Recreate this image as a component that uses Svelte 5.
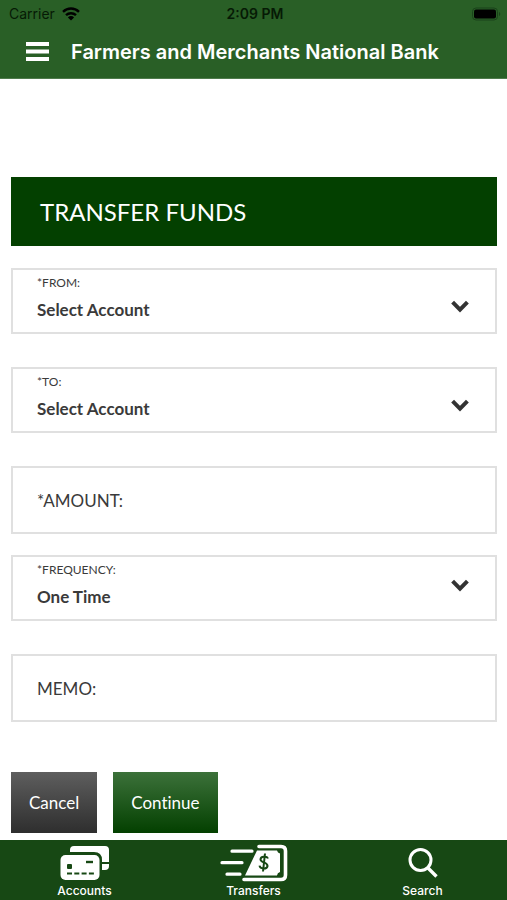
<script lang="ts">
  let from = $state('Select Account');
  let to = $state('Select Account');
  let amount = $state('');
  let frequency = $state('One Time');
  let memo = $state('');
</script>

{#snippet chevron()}
  <svg class="chevron" width="18" height="13" viewBox="0 0 18 13" aria-hidden="true">
    <path d="M1.6 2.2 9 9.6l7.4-7.4" fill="none" stroke="#333" stroke-width="4" />
  </svg>
{/snippet}

<div class="app">
  <header class="header">
    <div class="status">
      <span class="carrier">
        Carrier
        <svg width="18" height="14" viewBox="0 0 18 14" aria-hidden="true">
          <g fill="none" stroke="#000" stroke-width="2.4">
            <path d="M1 4.8a11.5 11.5 0 0 1 16 0" />
            <path d="M4 8.2a7.2 7.2 0 0 1 10 0" />
          </g>
          <path d="M9 13.6 5.9 10.4a4.4 4.4 0 0 1 6.2 0z" />
        </svg>
      </span>
      <span class="time">2:09 PM</span>
      <svg class="battery" width="30" height="14" viewBox="0 0 30 14" aria-hidden="true">
        <rect x="1.5" y="1" width="25" height="12" rx="3.5" fill="none" stroke="#1a431a" stroke-width="1" />
        <rect x="3" y="2.5" width="22" height="9" rx="2" />
        <path d="M28 5v4a2.2 2.2 0 0 0 0-4z" fill="#1a431a" />
      </svg>
    </div>
    <div class="title-bar">
      <button class="menu-btn" aria-label="Menu">
        <svg width="23" height="20" viewBox="0 0 23 20" aria-hidden="true">
          <path d="M0 2h23M0 9.5h23M0 17h23" stroke="#fff" stroke-width="4" />
        </svg>
      </button>
      <h1>Farmers and Merchants National Bank</h1>
    </div>
  </header>

  <main>
    <h2>TRANSFER FUNDS</h2>

    <form onsubmit={(e) => e.preventDefault()}>
      <div class="field select-field">
        <label for="from">*FROM:</label>
        <select id="from" bind:value={from}>
          <option>Select Account</option>
        </select>
        {@render chevron()}
      </div>

      <div class="field select-field">
        <label for="to">*TO:</label>
        <select id="to" bind:value={to}>
          <option>Select Account</option>
        </select>
        {@render chevron()}
      </div>

      <div class="field text-field amount">
        <label for="amount">*AMOUNT:</label>
        <input id="amount" type="text" inputmode="decimal" bind:value={amount} />
      </div>

      <div class="field select-field frequency">
        <label for="frequency">*FREQUENCY:</label>
        <select id="frequency" bind:value={frequency}>
          <option>One Time</option>
        </select>
        {@render chevron()}
      </div>

      <div class="field text-field">
        <label for="memo">MEMO:</label>
        <input id="memo" type="text" bind:value={memo} />
      </div>

      <div class="actions">
        <button type="button" class="btn cancel">Cancel</button>
        <button type="submit" class="btn continue">Continue</button>
      </div>
    </form>
  </main>

  <nav class="tabs">
    <a href="#accounts">
      <svg width="50" height="36" viewBox="0 0 50 36" aria-hidden="true">
        <path d="M10 7V5q0-4 4-4h31q4 0 4 4v12h-7v-2q0-8-8-8z" fill="#fff" />
        <path d="M42 19h7v2q0 4-4 4h-3z" fill="#fff" />
        <rect x="0.5" y="10" width="39" height="25" rx="5" fill="#fff" />
        <rect x="7" y="19" width="5" height="5" rx="1" fill="#174814" />
        <path d="M26 17h7" stroke="#174814" stroke-width="2.4" />
        <path d="M7 28.5h27" stroke="#174814" stroke-width="2" stroke-dasharray="5 2.3" />
      </svg>
      Accounts
    </a>
    <a href="#transfers">
      <svg width="68" height="38" viewBox="0 0 68 38" aria-hidden="true">
        <path d="M12 7.2h20M2 18.7h20M7 30.2h13" stroke="#fff" stroke-width="3.2" stroke-linecap="round" />
        <path d="M39 2.5h22q4.5 0 4.5 4.5v24q0 4.5-4.5 4.5H24" fill="none" stroke="#fff" stroke-width="3.6" stroke-linecap="round" />
        <path d="M37 6.500h20a4 4 0 0 0 3 3v18.500a4 4 0 0 0-3 3.500H25z" fill="#fff" />
        <g fill="none" stroke="#174814" stroke-width="2">
          <path d="M48 14.5c-1-2.600-7.500-2.400-7.500 1s7.700 2.400 7 6.800c-.6 3.200-7.400 3-8-.6" />
          <path d="M45 9.500 43 27.500" />
        </g>
      </svg>
      Transfers
    </a>
    <a href="#search">
      <svg width="32" height="32" viewBox="0 0 32 32" aria-hidden="true">
        <circle cx="13.5" cy="13" r="10.5" fill="none" stroke="#fff" stroke-width="3" />
        <path d="m21 21 8.5 8.5" stroke="#fff" stroke-width="3.4" />
      </svg>
      Search
    </a>
  </nav>
</div>

<style>
  :global(body) {
    background: #fff;
  }

  .app {
    display: flex;
    flex-direction: column;
    min-height: 100vh;
    font-family: Lato, sans-serif;
    color: #3a3a3a;
  }

  .header {
    background: #295f26;
    font-family: Inter, sans-serif;
    border-bottom: 1px solid #4f7b4c;
  }

  .status {
    display: grid;
    grid-template-columns: 1fr auto 1fr;
    align-items: center;
    height: 27px;
    padding: 0 6px 0 9px;
    font-size: 14px;
    color: #061a05;
  }

  .carrier {
    display: flex;
    align-items: center;
    gap: 7px;
  }

  .time {
    font-weight: 600;
  }

  .battery {
    justify-self: end;
  }

  .title-bar {
    display: flex;
    align-items: center;
    gap: 22px;
    height: 51px;
    padding: 0 26px 2px;
    box-sizing: border-box;
  }

  .menu-btn {
    display: flex;
    padding: 0;
    border: none;
    background: none;
    cursor: pointer;
  }

  h1 {
    margin: 0;
    font-size: 20px;
    font-weight: 600;
    color: #fff;
  }

  main {
    flex: 1;
    padding: 98px 10px 7px 11px;
  }

  h2 {
    margin: 0 0 22px;
    padding: 0 29px;
    background: #034000;
    color: #fff;
    font-size: 24px;
    font-weight: 400;
    line-height: 69px;
  }

  .field {
    box-sizing: border-box;
    margin-bottom: 33px;
    border: 2px solid #e0e0e0;
    background: #fff;
  }

  /* Label on top of the value, chevron beside it */
  .select-field {
    display: grid;
    grid-template-columns: 1fr 18px;
    grid-template-rows: 18px 34px;
    height: 66px;
    padding: 4px 26px 0 0;
  }

  .select-field label {
    padding-left: 24px;
    font-size: 12px;
    line-height: 18px;
  }

  .select-field select {
    grid-column: 1 / -1;
    grid-row: 2;
    margin-right: -26px;
    padding: 0 24px;
    border: none;
    background: transparent;
    appearance: none;
    font: bold 17px Lato, sans-serif;
    color: #3a3a3a;
  }

  .chevron {
    grid-column: 2;
    grid-row: 2;
    margin-top: 8px;
    pointer-events: none;
  }

  .frequency .chevron {
    margin-top: 0;
  }

  .text-field {
    display: flex;
    align-items: center;
    gap: 8px;
    height: 68px;
    padding: 0 24px;
    font-size: 17px;
  }

  .text-field input {
    flex: 1;
    min-width: 0;
    height: 40px;
    padding: 0;
    border: none;
    outline: none;
    background: transparent;
    font: inherit;
    color: inherit;
  }

  .amount {
    margin-bottom: 21px;
  }

  .actions {
    display: flex;
    gap: 16px;
    padding-top: 17px;
  }

  .btn {
    height: 61px;
    padding: 0 18px;
    border: none;
    font: 17px Lato, sans-serif;
    font-variant-ligatures: none;
    color: #fff;
    cursor: pointer;
  }

  .cancel {
    background: linear-gradient(#5e5e5e, #2e2e2e);
  }

  .continue {
    background: linear-gradient(#3c713a, #034000);
  }

  .tabs {
    position: sticky;
    bottom: 0;
    display: grid;
    grid-template-columns: repeat(3, 1fr);
    height: 60px;
    background: #174814;
    font-family: Inter, sans-serif;
  }

  .tabs a {
    display: flex;
    flex-direction: column;
    align-items: center;
    padding: 2px 0;
    color: #fff;
    font-size: 12px;
    font-weight: 500;
    line-height: 14px;
    text-decoration: none;
  }

  .tabs svg {
    margin: auto 0;
  }
</style>
